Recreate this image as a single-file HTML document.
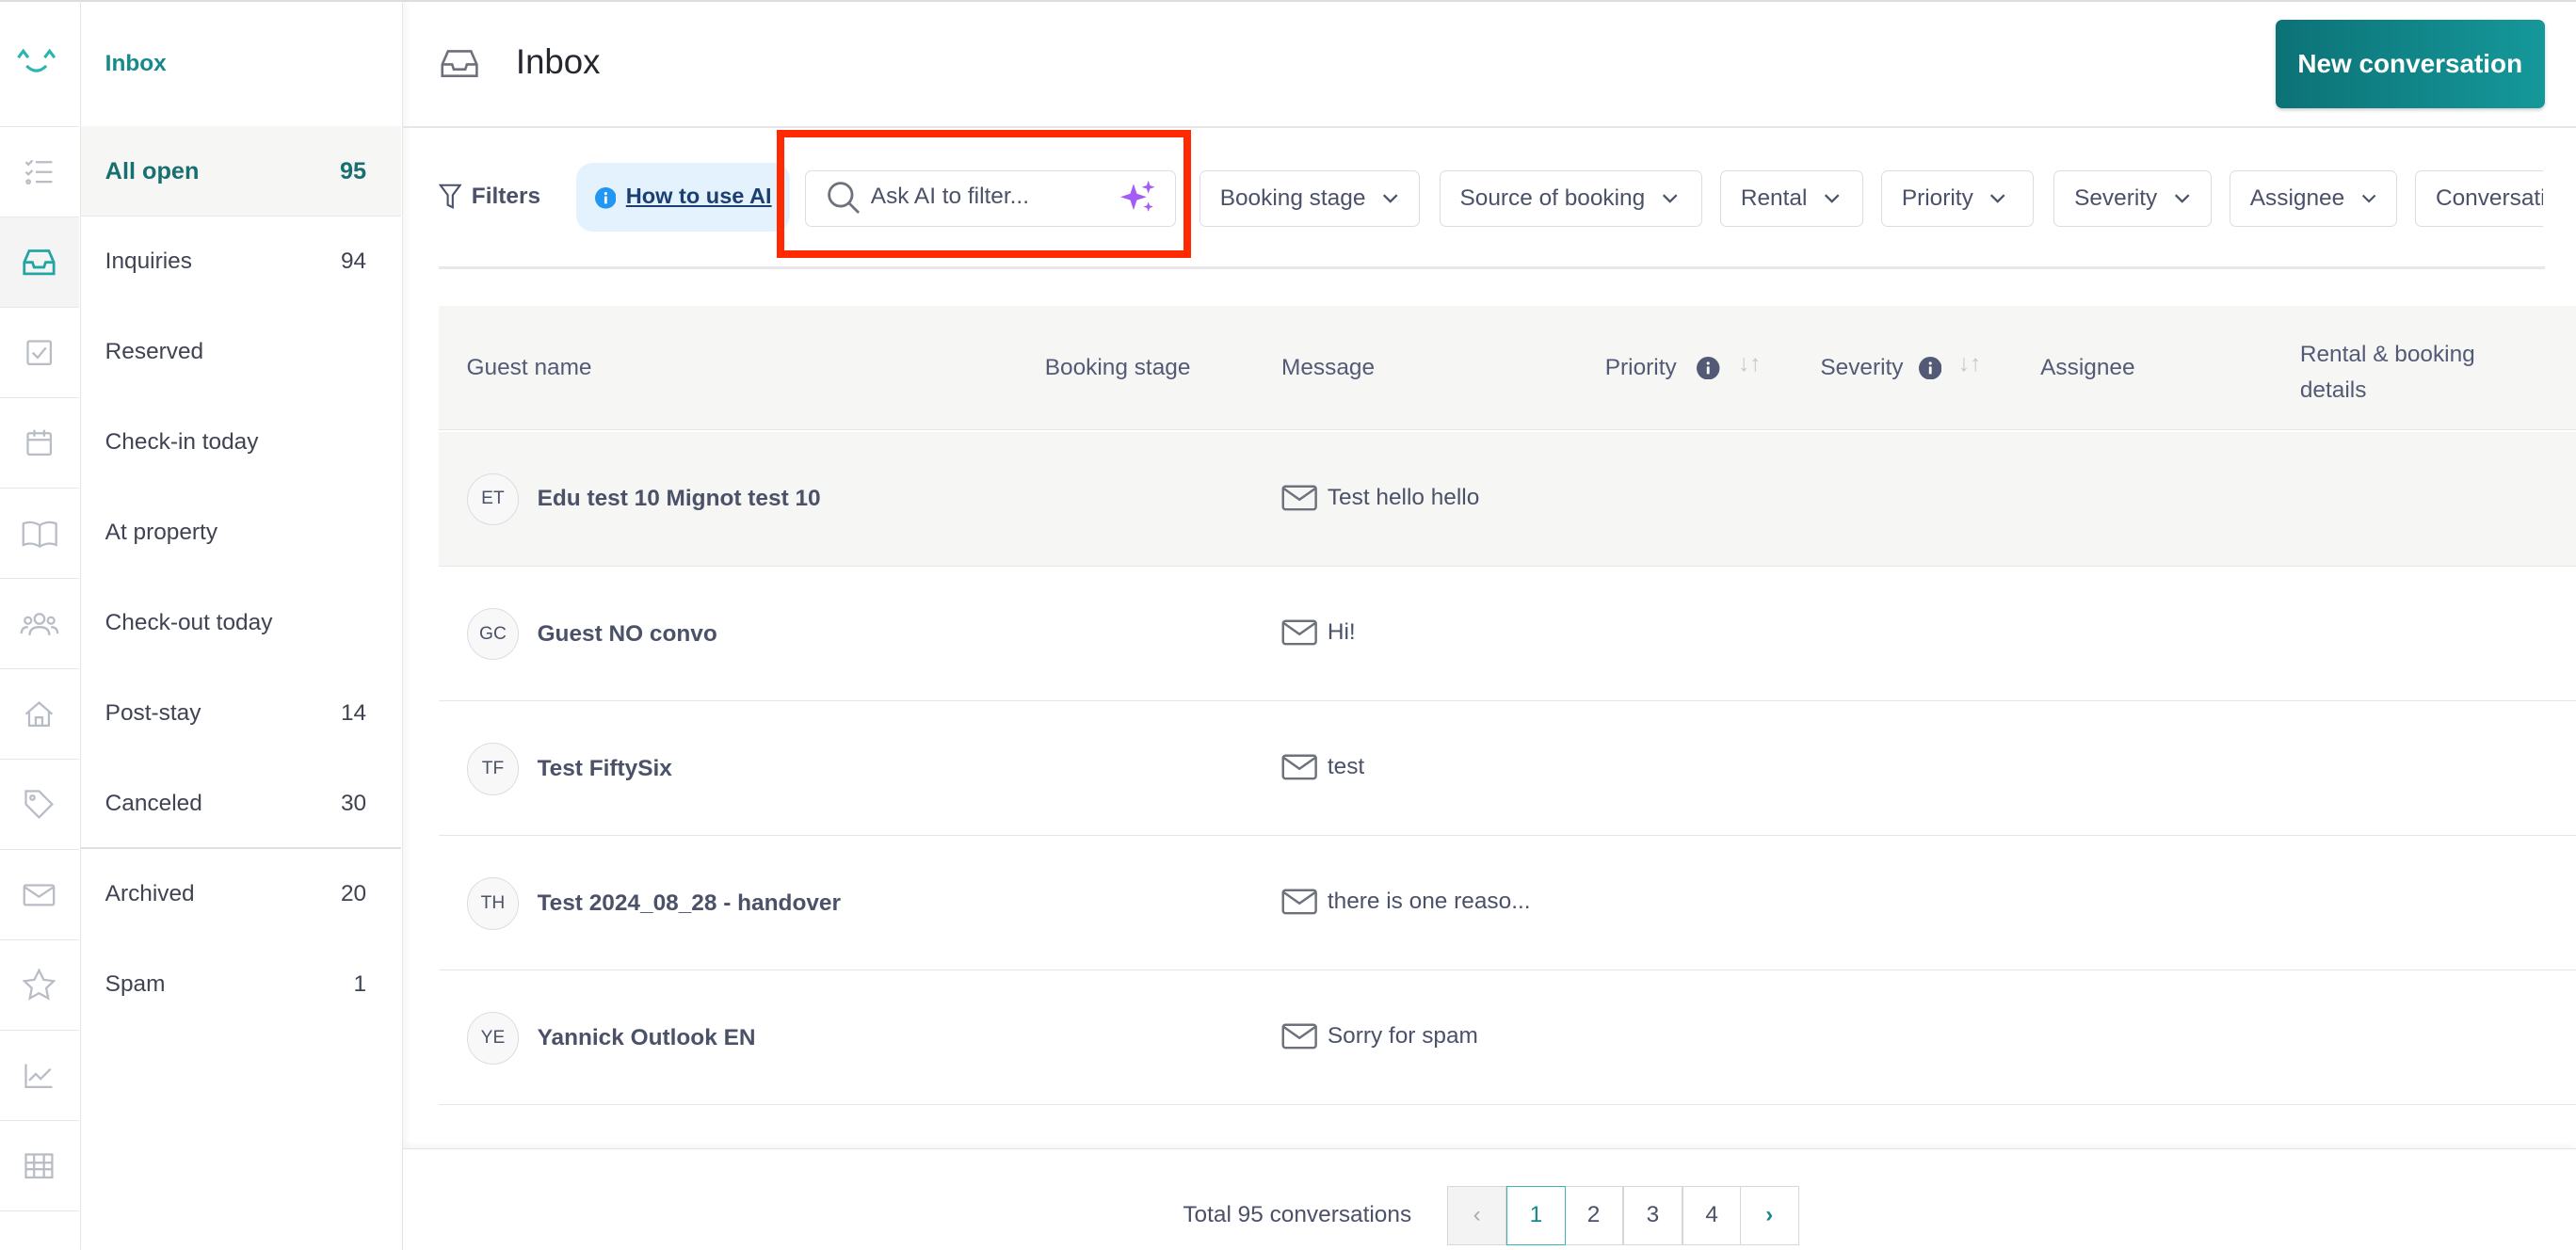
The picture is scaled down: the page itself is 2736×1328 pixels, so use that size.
<!DOCTYPE html>
<html><head><meta charset="utf-8"><style>
*{box-sizing:border-box;margin:0;padding:0}
html,body{width:2736px;height:1328px;overflow:hidden;background:#fff}
#root{zoom:1.7449;width:1568px;height:761px;position:relative;font-family:"Liberation Sans",sans-serif;color:#4b5168;font-size:14px}
.abs{position:absolute}
.rail{left:0;top:0;width:49px;height:761px;border-right:1px solid #e6e6e6}
.ri{position:absolute;left:0;width:48px;height:55px;border-top:1px solid #e8e8e8;display:flex;align-items:center;justify-content:center}
.side{left:49px;top:0;width:196px;height:761px;border-right:1px solid #e6e6e6;box-shadow:2px 0 4px rgba(0,0,0,.04)}
.si{position:absolute;left:0;width:195px;height:55px;display:flex;align-items:center;justify-content:space-between;padding:0 21px 0 15px;color:#3f4352;font-size:14px}
.fb{position:absolute;top:104px;height:34px;border:1px solid #dcdde3;border-radius:4px;display:flex;align-items:center;padding:0 12px;color:#4b5168;font-size:14px;gap:10px;background:#fff}
.fb svg{width:10px;height:10px}
.th{position:absolute;color:#535a75;font-size:14px}
.row{position:absolute;left:267px;width:1301px;height:82px;border-bottom:1px solid #e6e6e6}
.av{position:absolute;left:17px;top:25px;width:32px;height:32px;border-radius:50%;border:1px solid #dcdde3;background:#f8f8f8;font-size:11px;display:flex;align-items:center;justify-content:center;color:#4b5168}
.nm{position:absolute;left:60px;top:33px;font-weight:bold;color:#4b5168;font-size:14px}
.msg{position:absolute;left:513px;top:32px;display:flex;align-items:center;gap:6px;color:#4b5168}
.pg{position:absolute;top:722px;height:36px;width:36px;border:1px solid #d5d7dd;display:flex;align-items:center;justify-content:center;font-size:14px;color:#4b5168;background:#fff}
</style></head><body><div id="root">
<div class="abs" style="left:0;top:0;width:1568px;height:1px;background:#ddd"></div>
<!-- rail -->
<div class="abs rail">
<svg class="abs" style="left:9px;top:28px" width="26" height="20" viewBox="0 0 26 20"><path d="M2 7l3-4 3 4M18 7l3-4 3 4" fill="none" stroke="#2bb5b0" stroke-width="1.8"/><path d="M7 12q6 6 12 0" fill="none" stroke="#2bb5b0" stroke-width="1.8"/></svg>
<div class="ri" style="top:77px"><svg width="20" height="18" viewBox="0 0 20 18" fill="none" stroke="#b8bcc5" stroke-width="1.3"><path d="M2 3l1.5 1.5L6 2M2 9l1.5 1.5L6 8M8 3h10M8 9h10M8 15h10"/><circle cx="3.5" cy="15" r="1"/></svg></div>
<div class="ri" style="top:132px;background:#f4f4f4"><svg width="20" height="18" viewBox="0 0 20 18" fill="none" stroke="#22a6a3" stroke-width="1.6"><path d="M1 9l3-7h12l3 7v7H1z M1 9h5l1 3h6l1-3h5"/></svg></div>
<div class="ri" style="top:187px"><svg width="18" height="18" viewBox="0 0 18 18" fill="none" stroke="#b8bcc5" stroke-width="1.3"><rect x="2" y="2" width="14" height="14" rx="1"/><path d="M5 9l3 3 5-6"/></svg></div>
<div class="ri" style="top:242px"><svg width="18" height="18" viewBox="0 0 18 18" fill="none" stroke="#b8bcc5" stroke-width="1.3"><rect x="2" y="3" width="14" height="13" rx="1"/><path d="M2 7h14M6 1v4M12 1v4"/></svg></div>
<div class="ri" style="top:297px"><svg width="22" height="18" viewBox="0 0 22 18" fill="none" stroke="#b8bcc5" stroke-width="1.3"><path d="M11 4Q6 1 1 3v13q5-2 10 1q5-3 10-1V3q-5-2-10 1v13"/></svg></div>
<div class="ri" style="top:352px"><svg width="24" height="18" viewBox="0 0 24 18" fill="none" stroke="#b8bcc5" stroke-width="1.3"><circle cx="12" cy="6" r="3"/><circle cx="5" cy="7" r="2"/><circle cx="19" cy="7" r="2"/><path d="M6 16q0-5 6-5t6 5M1 15q0-4 4-4M23 15q0-4-4-4"/></svg></div>
<div class="ri" style="top:407px"><svg width="20" height="18" viewBox="0 0 20 18" fill="none" stroke="#b8bcc5" stroke-width="1.3"><path d="M2 9l8-7 8 7M4 7v9h12V7M8 16v-5h4v5"/></svg></div>
<div class="ri" style="top:462px"><svg width="20" height="20" viewBox="0 0 20 20" fill="none" stroke="#b8bcc5" stroke-width="1.3"><path d="M2 2h8l8 8-8 8-8-8z"/><circle cx="6" cy="6" r="1.3"/></svg></div>
<div class="ri" style="top:517px"><svg width="20" height="16" viewBox="0 0 20 16" fill="none" stroke="#b8bcc5" stroke-width="1.3"><rect x="1" y="2" width="18" height="12" rx="1"/><path d="M1 3l9 6 9-6"/></svg></div>
<div class="ri" style="top:572px"><svg width="20" height="20" viewBox="0 0 20 20" fill="none" stroke="#b8bcc5" stroke-width="1.3"><path d="M10 1l2.8 5.8 6.2.8-4.6 4.3 1.2 6.2L10 15l-5.6 3.1 1.2-6.2L1 7.6l6.2-.8z"/></svg></div>
<div class="ri" style="top:627px"><svg width="20" height="18" viewBox="0 0 20 18" fill="none" stroke="#b8bcc5" stroke-width="1.3"><path d="M2 2v14h16M4 12l4-4 3 3 6-6"/></svg></div>
<div class="ri" style="top:682px"><svg width="20" height="18" viewBox="0 0 20 18" fill="none" stroke="#b8bcc5" stroke-width="1.3"><rect x="2" y="2" width="16" height="14"/><path d="M2 7h16M2 11h16M7 2v14M13 2v14"/></svg></div>
<div class="ri" style="top:737px"><svg width="20" height="18" viewBox="0 0 20 18" fill="none" stroke="#b8bcc5" stroke-width="1.3"><path d="M2 14l16-6"/></svg></div>
</div>
<!-- sidebar -->
<div class="abs side">
<div class="abs" style="left:15px;top:31px;color:#16898a;font-size:14px;font-weight:bold">Inbox</div>
<div class="abs" style="left:0;top:77px;width:195px;height:1px;background:#e6e6e6"></div>
<div class="si" style="top:77px;background:#f6f6f4;color:#176f70;font-weight:bold;font-size:14.5px"><span>All open</span><span>95</span></div>
<div class="abs" style="left:0;top:131px;width:195px;height:1px;background:#e8e8e8"></div>
<div class="si" style="top:132px"><span>Inquiries</span><span>94</span></div>
<div class="si" style="top:187px"><span>Reserved</span></div>
<div class="si" style="top:242px"><span>Check-in today</span></div>
<div class="si" style="top:297px"><span>At property</span></div>
<div class="si" style="top:352px"><span>Check-out today</span></div>
<div class="si" style="top:407px"><span>Post-stay</span><span>14</span></div>
<div class="si" style="top:462px"><span>Canceled</span><span>30</span></div>
<div class="abs" style="left:0;top:516px;width:195px;height:1px;background:#e0e0e0"></div>
<div class="si" style="top:517px"><span>Archived</span><span>20</span></div>
<div class="si" style="top:572px"><span>Spam</span><span>1</span></div>
</div>
<!-- header -->
<svg class="abs" style="left:268px;top:29px" width="23" height="19" viewBox="0 0 23 19" fill="none" stroke="#6d717c" stroke-width="1.5"><path d="M1 10l3.5-8h14l3.5 8v7H1z M1 10h6l1 3h7l1-3h6"/></svg>
<div class="abs" style="left:314px;top:26px;font-size:21px;color:#25272e">Inbox</div>
<div class="abs" style="left:1385px;top:12px;width:164px;height:54px;border-radius:4px;background:linear-gradient(90deg,#0c7276,#15989a);color:#fff;font-size:16px;font-weight:bold;display:flex;align-items:center;justify-content:center;box-shadow:0 1px 2px rgba(0,0,0,.2)">New conversation</div>
<div class="abs" style="left:245px;top:77px;width:1323px;height:1px;background:#e6e6e6"></div>
<!-- filters -->
<svg class="abs" style="left:267px;top:112px" width="14" height="16" viewBox="0 0 14 16" fill="none" stroke="#4b5168" stroke-width="1.2"><path d="M1 1h12L8.5 7v7.5L5.5 13V7z"/></svg>
<div class="abs" style="left:287px;top:112px;font-weight:bold;color:#4b5168">Filters</div>
<div class="abs" style="left:351px;top:99px;width:130px;height:42px;background:#e3f2fd;border-radius:10px"></div>
<svg class="abs" style="left:362px;top:114px" width="13" height="13" viewBox="0 0 13 13"><circle cx="6.5" cy="6.5" r="6.5" fill="#2196f3"/><rect x="5.7" y="5.5" width="1.6" height="4.5" fill="#fff"/><circle cx="6.5" cy="3.8" r="0.9" fill="#fff"/></svg>
<div class="abs" style="left:381px;top:112px;color:#1b3f72;text-decoration:underline;font-weight:bold;font-size:13.5px">How to use AI</div>
<div class="abs" style="left:490px;top:104px;width:226px;height:34px;border:1px solid #dcdde3;border-radius:4px;background:#fff"></div>
<svg class="abs" style="left:503px;top:110px" width="21" height="21" viewBox="0 0 21 21" fill="none" stroke="#6d717c" stroke-width="1.6"><circle cx="8.5" cy="8.5" r="7"/><path d="M13.5 13.5l6 6"/></svg>
<div class="abs" style="left:530px;top:112px;color:#4b5168">Ask AI to filter...</div>
<svg class="abs" style="left:682px;top:109px" width="22" height="22" viewBox="0 0 22 22" fill="#a45cf5"><path d="M8 3l2 6 6 2-6 2-2 6-2-6-6-2 6-2z"/><path d="M17 1l1 3 3 1-3 1-1 3-1-3-3-1 3-1z"/><path d="M17 14l.8 2.2 2.2.8-2.2.8L17 20l-.8-2.2L14 17l2.2-.8z"/></svg>
<div class="abs" style="left:473px;top:79px;width:252px;height:78px;border:5px solid #ff2a00"></div>
<div class="fb" style="left:730px;width:134px">Booking stage <svg viewBox="0 0 10 10"><path d="M1 3l4 4 4-4" fill="none" stroke="#4b5168" stroke-width="1.3"/></svg></div>
<div class="fb" style="left:876px;width:160px">Source of booking <svg viewBox="0 0 10 10"><path d="M1 3l4 4 4-4" fill="none" stroke="#4b5168" stroke-width="1.3"/></svg></div>
<div class="fb" style="left:1047px;width:87px">Rental <svg viewBox="0 0 10 10"><path d="M1 3l4 4 4-4" fill="none" stroke="#4b5168" stroke-width="1.3"/></svg></div>
<div class="fb" style="left:1145px;width:93px">Priority <svg viewBox="0 0 10 10"><path d="M1 3l4 4 4-4" fill="none" stroke="#4b5168" stroke-width="1.3"/></svg></div>
<div class="fb" style="left:1250px;width:96px">Severity <svg viewBox="0 0 10 10"><path d="M1 3l4 4 4-4" fill="none" stroke="#4b5168" stroke-width="1.3"/></svg></div>
<div class="fb" style="left:1357px;width:102px">Assignee <svg viewBox="0 0 10 10"><path d="M1 3l4 4 4-4" fill="none" stroke="#4b5168" stroke-width="1.3"/></svg></div>
<div class="abs" style="left:1470px;top:104px;width:80px;height:34px;overflow:hidden"><div class="fb" style="left:0;top:0;width:120px">Conversation</div></div>
<div class="abs" style="left:1548px;top:100px;width:20px;height:44px;background:#fff"></div>
<div class="abs" style="left:267px;top:162px;width:1282px;height:2px;background:#e8e8ea"></div>
<!-- table header -->
<div class="abs" style="left:267px;top:186px;width:1301px;height:76px;background:#f6f6f5;border-bottom:1px solid #e6e6e6"></div>
<div class="th" style="left:284px;top:216px">Guest name</div>
<div class="th" style="left:636px;top:216px">Booking stage</div>
<div class="th" style="left:780px;top:216px">Message</div>
<div class="th" style="left:977px;top:216px">Priority</div>
<svg class="abs" style="left:1033px;top:217px" width="14" height="14"><circle cx="7" cy="7" r="7" fill="#535a75"/><rect x="6.2" y="6" width="1.6" height="4.5" fill="#fff"/><circle cx="7" cy="4" r=".9" fill="#fff"/></svg>
<div class="th" style="left:1058px;top:214px;color:#c5c8cf">↓↑</div>
<div class="th" style="left:1108px;top:216px">Severity</div>
<svg class="abs" style="left:1168px;top:217px" width="14" height="14"><circle cx="7" cy="7" r="7" fill="#535a75"/><rect x="6.2" y="6" width="1.6" height="4.5" fill="#fff"/><circle cx="7" cy="4" r=".9" fill="#fff"/></svg>
<div class="th" style="left:1192px;top:214px;color:#c5c8cf">↓↑</div>
<div class="th" style="left:1242px;top:216px">Assignee</div>
<div class="th" style="left:1400px;top:205px;line-height:22px">Rental &amp; booking<br>details</div>
<!-- rows -->
<div class="row" style="top:263px;background:#f6f6f5"><div class="av">ET</div><div class="nm">Edu test 10 Mignot test 10</div><div class="msg"><svg width="22" height="16" viewBox="0 0 22 16" fill="none" stroke="#6d717c" stroke-width="1.4"><rect x="1" y="1" width="20" height="14" rx="1.5"/><path d="M1 2l10 7 10-7"/></svg>Test hello hello</div></div>
<div class="row" style="top:345px"><div class="av">GC</div><div class="nm">Guest NO convo</div><div class="msg"><svg width="22" height="16" viewBox="0 0 22 16" fill="none" stroke="#6d717c" stroke-width="1.4"><rect x="1" y="1" width="20" height="14" rx="1.5"/><path d="M1 2l10 7 10-7"/></svg>Hi!</div></div>
<div class="row" style="top:427px"><div class="av">TF</div><div class="nm">Test FiftySix</div><div class="msg"><svg width="22" height="16" viewBox="0 0 22 16" fill="none" stroke="#6d717c" stroke-width="1.4"><rect x="1" y="1" width="20" height="14" rx="1.5"/><path d="M1 2l10 7 10-7"/></svg>test</div></div>
<div class="row" style="top:509px"><div class="av">TH</div><div class="nm">Test 2024_08_28 - handover</div><div class="msg"><svg width="22" height="16" viewBox="0 0 22 16" fill="none" stroke="#6d717c" stroke-width="1.4"><rect x="1" y="1" width="20" height="14" rx="1.5"/><path d="M1 2l10 7 10-7"/></svg>there is one reaso...</div></div>
<div class="row" style="top:591px"><div class="av">YE</div><div class="nm">Yannick Outlook EN</div><div class="msg"><svg width="22" height="16" viewBox="0 0 22 16" fill="none" stroke="#6d717c" stroke-width="1.4"><rect x="1" y="1" width="20" height="14" rx="1.5"/><path d="M1 2l10 7 10-7"/></svg>Sorry for spam</div></div>
<!-- footer -->
<div class="abs" style="left:245px;top:699px;width:1323px;height:62px;background:#fff;border-top:1px solid #e2e2e2;box-shadow:0 -2px 4px rgba(0,0,0,.04)"></div>
<div class="abs" style="left:720px;top:732px;color:#4b5168">Total 95 conversations</div>
<div class="pg" style="left:881px;background:#f3f3f3;color:#aaa">‹</div>
<div class="pg" style="left:917px;border-color:#3fb3b0;color:#168a8a;z-index:2">1</div>
<div class="pg" style="left:952px">2</div>
<div class="pg" style="left:988px">3</div>
<div class="pg" style="left:1024px">4</div>
<div class="pg" style="left:1059px;color:#168a8a;font-weight:bold">›</div>
</div></body></html>
